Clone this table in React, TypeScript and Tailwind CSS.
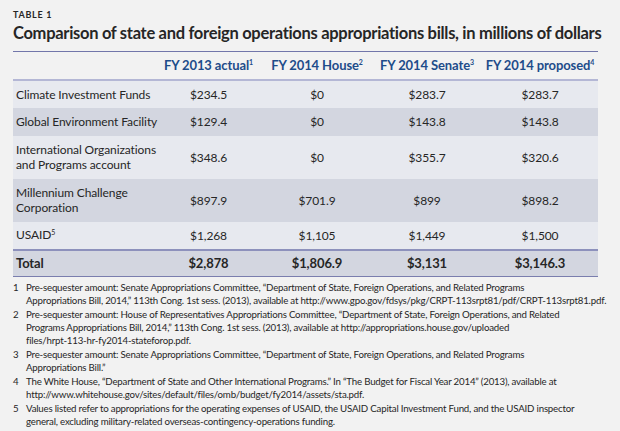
import React from 'react';

const rows = [
  { label: 'Climate Investment Funds', vals: ['$234.5', '$0', '$283.7', '$283.7'] },
  { label: 'Global Environment Facility', vals: ['$129.4', '$0', '$143.8', '$143.8'] },
  { label: ['International Organizations', 'and Programs account'], vals: ['$348.6', '$0', '$355.7', '$320.6'] },
  { label: ['Millennium Challenge', 'Corporation'], vals: ['$897.9', '$701.9', '$899', '$898.2'] },
  { label: 'USAID', sup: '5', vals: ['$1,268', '$1,105', '$1,449', '$1,500'] },
];

const heads = [
  { t: 'FY 2013 actual', n: '1' },
  { t: 'FY 2014 House', n: '2' },
  { t: 'FY 2014 Senate', n: '3' },
  { t: 'FY 2014 proposed', n: '4' },
];

const notes = [
  [
    'Pre-sequester amount: Senate Appropriations Committee, \u201cDepartment of State, Foreign Operations, and Related Programs',
    'Appropriations Bill, 2014,\u201d 113th Cong. 1st sess. (2013), available at http://www.gpo.gov/fdsys/pkg/CRPT-113srpt81/pdf/CRPT-113srpt81.pdf.',
  ],
  [
    'Pre-sequester amount: House of Representatives Appropriations Committee, \u201cDepartment of State, Foreign Operations, and Related',
    'Programs Appropriations Bill, 2014,\u201d 113th Cong. 1st sess. (2013), available at http://appropriations.house.gov/uploaded',
    'files/hrpt-113-hr-fy2014-stateforop.pdf.',
  ],
  [
    'Pre-sequester amount: Senate Appropriations Committee, \u201cDepartment of State, Foreign Operations, and Related Programs',
    'Appropriations Bill.\u201d',
  ],
  [
    'The White House, \u201cDepartment of State and Other International Programs.\u201d In \u201cThe Budget for Fiscal Year 2014\u201d (2013), available at',
    'http://www.whitehouse.gov/sites/default/files/omb/budget/fy2014/assets/sta.pdf.',
  ],
  [
    'Values listed refer to appropriations for the operating expenses of USAID, the USAID Capital Investment Fund, and the USAID inspector',
    'general, excluding military-related overseas-contingency-operations funding.',
  ],
];

export default function App() {
  return (
    <div className="w-[620px] h-[431px] bg-[#f2f2f2] text-[#262626] overflow-hidden pl-[13px] pt-[10px]" style={{ fontFamily: 'Lato, "Open Sans", sans-serif' }}>
      <div className="text-[9px] font-bold tracking-[0.08em] leading-[10px]">TABLE 1</div>
      <h1 className="text-[16.5px] font-bold leading-[20px] mt-[3px] tracking-[-0.3px] whitespace-nowrap">
        Comparison of state and foreign operations appropriations bills, in millions of dollars
      </h1>

      <table className="mt-[8px] w-[585px] table-fixed border-collapse text-[12px] tracking-[-0.1px]">
        <colgroup>
          <col className="w-[142px]" />
          <col className="w-[107px]" />
          <col className="w-[110px]" />
          <col className="w-[110px]" />
          <col className="w-[116px]" />
        </colgroup>
        <thead>
          <tr className="h-[28px] border-t border-[#7276aa] border-b-2 border-b-[#b4b7d5]">
            <th />
            {heads.map((h) => (
              <th key={h.t} className="p-0 text-center font-bold text-[#1e4c8a] whitespace-nowrap text-[13px]">
                {h.t}
                <span className="text-[7px] relative -top-[5px]">{h.n}</span>
              </th>
            ))}
          </tr>
        </thead>
        <tbody>
          {rows.map((r, i) => {
            const two = Array.isArray(r.label);
            return (
              <tr key={i} className={(i % 2 === 0 ? 'bg-[#e7e9ef] ' : 'bg-[#d3d6e0] ') + (two ? 'h-[43px]' : 'h-[28px]')}>
                <td className="pl-[3px] py-0 leading-[15px] whitespace-nowrap">
                  {two ? (
                    <>
                      {r.label[0]}
                      <br />
                      {r.label[1]}
                    </>
                  ) : (
                    r.label
                  )}
                  {r.sup && <span className="text-[7px] relative -top-[4px]">{r.sup}</span>}
                </td>
                {r.vals.map((v, j) => (
                  <td key={j} className="text-center leading-[15px] py-0">{v}</td>
                ))}
              </tr>
            );
          })}
          <tr className="bg-[#d3d6e0] h-[27px] border-t-2 border-[#8d91bc] border-b border-b-[#7a7eae] font-bold text-[13px]">
            <td className="pl-[3px]">Total</td>
            <td className="text-center">$2,878</td>
            <td className="text-center">$1,806.9</td>
            <td className="text-center">$3,131</td>
            <td className="text-center">$3,146.3</td>
          </tr>
        </tbody>
      </table>

      <div className="mt-[4px] text-[9.7px] leading-[13px] tracking-[-0.2px]">
        {notes.map((lines, i) => (
          <div key={i} className="flex mb-px">
            <div className="w-[13px] shrink-0">{i + 1}</div>
            <div className="whitespace-nowrap">
              {lines.map((l, k) => (
                <div key={k}>{l}</div>
              ))}
            </div>
          </div>
        ))}
      </div>
    </div>
  );
}
